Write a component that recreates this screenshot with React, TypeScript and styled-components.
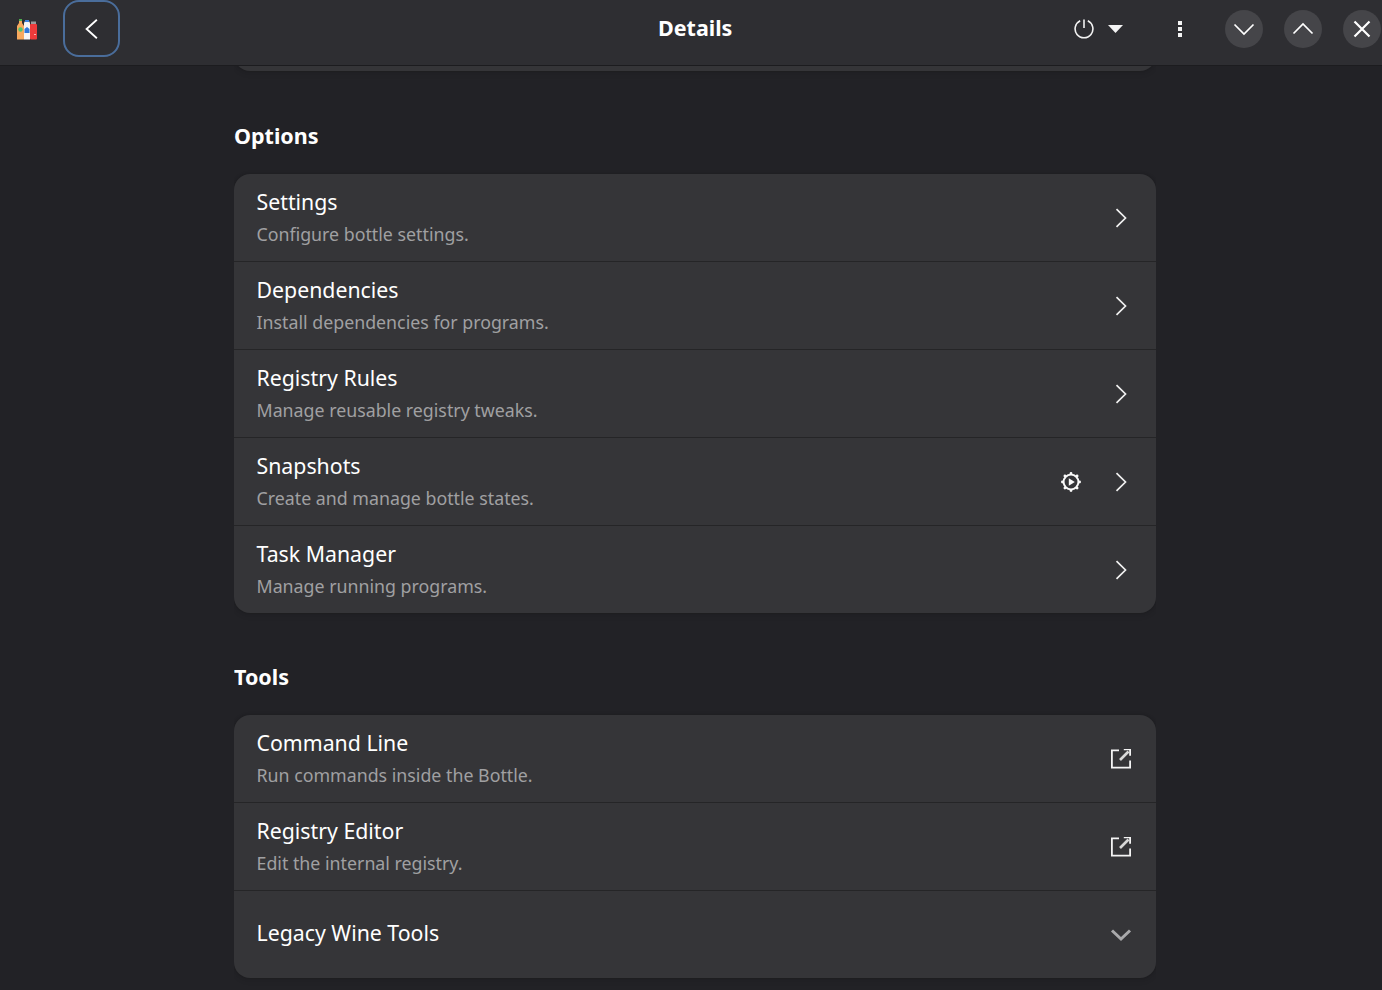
import React from 'react';
import styled, {createGlobalStyle} from 'styled-components';

const GlobalStyle = createGlobalStyle`
  html, body {
    margin: 0;
    padding: 0;
    background: #222226;
  }
  body {
    font-family: "Noto Sans", "Open Sans", sans-serif;
    color: #fff;
  }
`;

const Page = styled.div`
  width: 1382px;
  height: 990px;
  overflow: hidden;
  display: flex;
  flex-direction: column;
  background: #222226;
`;

const HeaderBar = styled.header`
  flex: none;
  box-sizing: border-box;
  height: 66px;
  padding-bottom: 8px;
  display: grid;
  grid-template-columns: 658px auto 1fr;
  align-items: center;
  background: #2e2e32;
  border-bottom: 1px solid #1c1c1f;
  position: relative;
  z-index: 1;
`;

const HeaderStart = styled.div`
  display: flex;
  align-items: center;
  padding-left: 16px;
  gap: 23px;
`;

const HeaderEnd = styled.div`
  display: flex;
  align-items: center;
  justify-content: flex-end;
`;

const Title = styled.h1`
  margin: 0 0 2px;
  font-size: 21.5px;
  font-weight: 700;
  line-height: 28px;
  color: #fff;
`;

const BackButton = styled.button`
  width: 57px;
  height: 57px;
  padding: 0;
  display: flex;
  align-items: center;
  justify-content: center;
  background: transparent;
  border: 2.5px solid #4a6d9b;
  border-radius: 16px;
  color: #fff;
`;

const IconSlot = styled.span`
  display: flex;
  align-items: center;
  justify-content: center;
`;

const PowerGroup = styled.div`
  display: flex;
  align-items: center;
  gap: 14px;
  margin-right: 55px;
`;

const MenuDots = styled.div`
  margin-right: 43px;
  display: flex;
`;

const WindowButtons = styled.div`
  display: flex;
  gap: 21px;
  padding-right: 1px;
`;

const WindowButton = styled.button`
  width: 38px;
  height: 38px;
  padding: 0;
  display: flex;
  align-items: center;
  justify-content: center;
  border: none;
  border-radius: 50%;
  background: #454549;
  color: #fff;
`;

const Main = styled.main`
  flex: 1;
  overflow: hidden;
  width: 922px;
  margin-left: 234px;
`;

const Card = styled.div`
  background: #353538;
  border-radius: 16px;
  overflow: hidden;
  box-shadow: 0 0 0 1px rgba(0, 0, 0, 0.03), 0 1px 3px 1px rgba(0, 0, 0, 0.07), 0 2px 6px 2px rgba(0, 0, 0, 0.03);
`;

const ScrolledCard = styled(Card)`
  height: 40px;
  margin-top: -35px;
`;

const SectionTitle = styled.h2<{$top: number}>`
  margin: ${(p) => p.$top}px 0 24px;
  font-size: 21.5px;
  font-weight: 700;
  line-height: 28px;
  color: #fff;
`;

const Row = styled.div`
  height: 87px;
  display: flex;
  align-items: center;
  padding: 0 24px 0 22.5px;
  border-bottom: 1px solid #252527;

  &:last-child {
    border-bottom: none;
  }
`;

const RowText = styled.div<{$single?: boolean}>`
  flex: 1;
  min-width: 0;
  padding-bottom: ${(p) => (p.$single ? 3 : 1)}px;
`;

const RowTitle = styled.div`
  font-size: 21.3px;
  line-height: 30px;
  color: #fff;
`;

const RowSubtitle = styled.div`
  margin-top: 4px;
  font-size: 17.8px;
  line-height: 26px;
  color: #a0a0a2;
`;

const RowSuffix = styled.div`
  display: flex;
  align-items: center;
  gap: 28px;
`;

const SuffixSlot = styled.span`
  width: 22px;
  display: flex;
  align-items: center;
  justify-content: center;
`;

const PowerIcon = () => (
  <svg width="20" height="20" viewBox="0 0 20 20" fill="none" stroke="#f2f2f2" strokeWidth="1.6">
    <path d="M6.2 1.800a8.900 8.900 0 1 0 7.600 0" />
    <path d="M10 0.500v8.500" />
  </svg>
);

const CaretDown = () => (
  <svg width="15" height="8" viewBox="0 0 15 8">
    <path d="M0 0h15L7.500 8z" fill="#f4f4f4" />
  </svg>
);

const Dots = () => (
  <svg width="4" height="16" viewBox="0 0 4 16" fill="#f4f4f4">
    <rect x="0" y="0" width="4" height="4" />
    <rect x="0" y="6" width="4" height="4" />
    <rect x="0" y="12" width="4" height="4" />
  </svg>
);

const AppLogo = () => (
  <svg width="24" height="24" viewBox="0 0 24 24">
    <path d="M1 9l2-3V3h3v3l2 3v13.500H1z" fill="#f7a95e" />
    <rect x="3" y="2" width="3" height="2" fill="#4caf50" />
    <circle cx="4.500" cy="12.500" r="2.200" fill="#4fc46d" />
    <path d="M8 6l1-2h4l1 2v16.500H8z" fill="#f4f4f4" />
    <rect x="9" y="3" width="4" height="2" fill="#3b82e0" />
    <path d="M8.500 12l2.500-2 2.500 2v4h-5z" fill="#2f77d8" />
    <rect x="14" y="7" width="7" height="15.500" rx="1" fill="#ee3b3b" />
    <rect x="15" y="4.500" width="5" height="2.500" fill="#9a9a9a" />
    <rect x="18" y="17" width="2" height="1" fill="#f7b5b5" />
  </svg>
);

const Glyph = ({d, size = 24, width = 2}: {d: string; size?: number; width?: number}) => (
  <svg width={size} height={size} viewBox="0 0 24 24" fill="none" stroke="currentColor" strokeWidth={width}>
    <path d={d} />
  </svg>
);

const gearTeeth = [0, 45, 90, 135, 180, 225, 270, 315];

const SnapshotIcon = () => (
  <svg width="22" height="22" viewBox="0 0 22 22" fill="none" stroke="#fafafa">
    <circle cx="11" cy="11" r="7.400" strokeWidth="1.900" />
    <g fill="#fafafa" stroke="none">
      {gearTeeth.map((a) => (
        <circle
          key={a}
          cx={11 + 8.6 * Math.cos((a * Math.PI) / 180)}
          cy={11 + 8.6 * Math.sin((a * Math.PI) / 180)}
          r="1.400"
        />
      ))}
      <path d="M8.800 7.300v7.400l6-3.700z" />
    </g>
  </svg>
);

const ExternalIcon = () => (
  <svg width="22" height="20" viewBox="0 0.5 22 20" fill="none" stroke="#f4f4f4" strokeWidth="1.800">
    <path d="M9 1.900H1.900v17.200h18.200V12" />
    <path d="M10 11.500L18.500 3" strokeWidth="2.600" stroke="#d8d8d8" />
    <path d="M13.800 0.900h6.300v6.300" />
  </svg>
);

const RowChevron = () => (
  <svg width="12" height="20" viewBox="0 0 12 20" fill="none" stroke="#f0f0f0" strokeWidth="1.700">
    <path d="M1.500 1.200L10.500 10l-9 8.800" />
  </svg>
);

const ExpandChevron = () => (
  <svg width="22" height="14" viewBox="0 0 22 14" fill="none" stroke="#a9a9ab" strokeWidth="3">
    <path d="M2 2.500L11 11l9-8.500" />
  </svg>
);

const options = [
  {title: 'Settings', subtitle: 'Configure bottle settings.'},
  {title: 'Dependencies', subtitle: 'Install dependencies for programs.'},
  {title: 'Registry Rules', subtitle: 'Manage reusable registry tweaks.'},
  {title: 'Snapshots', subtitle: 'Create and manage bottle states.', snapshot: true},
  {title: 'Task Manager', subtitle: 'Manage running programs.'},
];

const tools = [
  {title: 'Command Line', subtitle: 'Run commands inside the Bottle.'},
  {title: 'Registry Editor', subtitle: 'Edit the internal registry.'},
];

export default function App(): React.ReactElement {
  return (
    <Page>
      <GlobalStyle />
      <HeaderBar>
        <HeaderStart>
          <AppLogo />
          <BackButton aria-label="Back">
            <Glyph d="M16.500 3.500L7 12l9.500 8.500" size={26} width={1.700} />
          </BackButton>
        </HeaderStart>
        <Title>Details</Title>
        <HeaderEnd>
          <PowerGroup>
            <IconSlot><PowerIcon /></IconSlot>
            <IconSlot><CaretDown /></IconSlot>
          </PowerGroup>
          <MenuDots><Dots /></MenuDots>
          <WindowButtons>
            <WindowButton aria-label="Down"><Glyph d="M2.500 7.500L12 17l9.500-9.500" size={24} width={1.700} /></WindowButton>
            <WindowButton aria-label="Up"><Glyph d="M2.500 16.500L12 7l9.500 9.500" size={24} width={1.700} /></WindowButton>
            <WindowButton aria-label="Close"><Glyph d="M4.500 4.500l15 15M19.500 4.500l-15 15" size={24} width={2.200} /></WindowButton>
          </WindowButtons>
        </HeaderEnd>
      </HeaderBar>
      <Main>
        <ScrolledCard />
        <SectionTitle $top={51}>Options</SectionTitle>
        <Card>
          {options.map((o) => (
            <Row key={o.title}>
              <RowText>
                <RowTitle>{o.title}</RowTitle>
                <RowSubtitle>{o.subtitle}</RowSubtitle>
              </RowText>
              <RowSuffix>
                {o.snapshot && <SnapshotIcon />}
                <SuffixSlot><RowChevron /></SuffixSlot>
              </RowSuffix>
            </Row>
          ))}
        </Card>
        <SectionTitle $top={50}>Tools</SectionTitle>
        <Card>
          {tools.map((t) => (
            <Row key={t.title}>
              <RowText>
                <RowTitle>{t.title}</RowTitle>
                <RowSubtitle>{t.subtitle}</RowSubtitle>
              </RowText>
              <RowSuffix>
                <SuffixSlot><ExternalIcon /></SuffixSlot>
              </RowSuffix>
            </Row>
          ))}
          <Row>
            <RowText $single>
              <RowTitle>Legacy Wine Tools</RowTitle>
            </RowText>
            <RowSuffix>
              <SuffixSlot><ExpandChevron /></SuffixSlot>
            </RowSuffix>
          </Row>
        </Card>
      </Main>
    </Page>
  );
}
